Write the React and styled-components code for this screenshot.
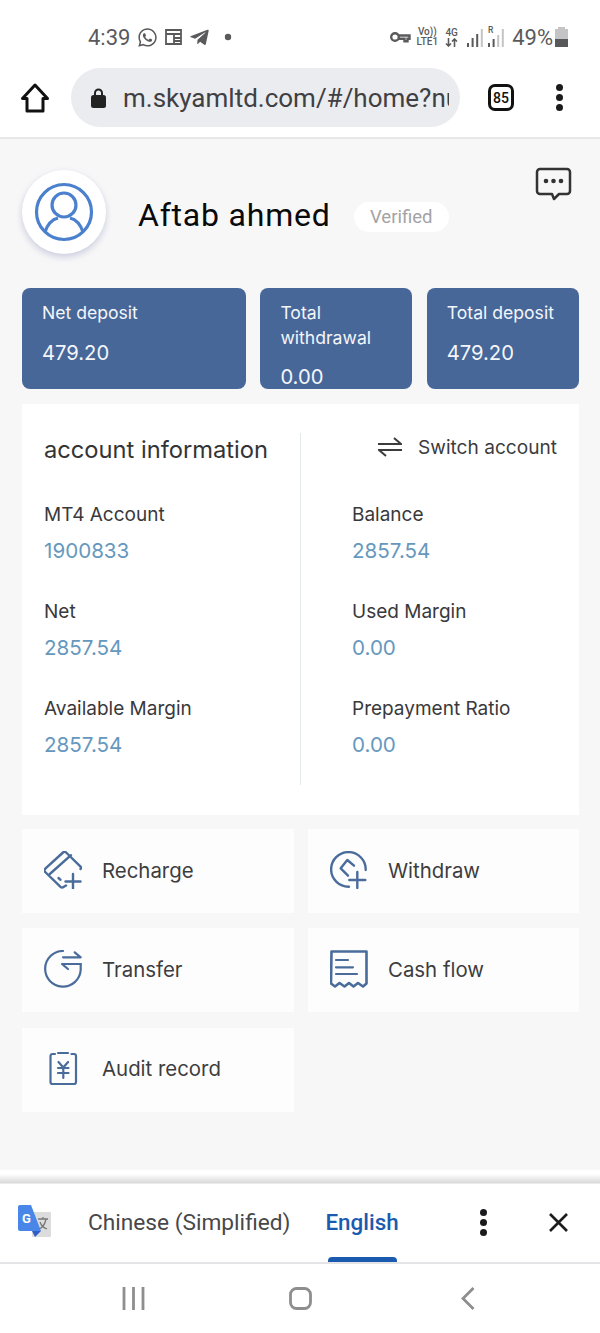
import React from 'react';
import styled, { createGlobalStyle } from 'styled-components';
import { FaWhatsapp, FaTelegramPlane } from 'react-icons/fa';

const GlobalStyle = createGlobalStyle`
  html, body { margin: 0; padding: 0; background: #fff; }
  body { font-family: Roboto, "Liberation Sans", sans-serif; }
  * { box-sizing: border-box; }
`;

const Screen = styled.div`
  width: 600px;
  height: 1333px;
  display: flex;
  flex-direction: column;
  overflow: hidden;
  background: #fff;
`;

/* status bar */
const StatusBar = styled.div`
  height: 68px;
  flex: none;
  padding: 6px 32px 0 88px;
  display: flex;
  align-items: center;
  justify-content: space-between;
  color: #5a5a5c;
`;
const StatusGroup = styled.div`
  display: flex;
  align-items: center;
`;
const Clock = styled.span`
  font-size: 22px;
  margin-right: 7px;
`;
const Pct = styled.span`
  font-size: 22px;
  margin: 0 2px 0 8px;
`;
const NetText = styled.div`
  display: flex;
  flex-direction: column;
  align-items: center;
  font-size: 10px;
  line-height: 10px;
  font-weight: 500;
  margin-left: ${p => p.$gap}px;
`;
const StatusSvg = styled.svg`
  display: block;
  margin-left: ${p => p.$left || 0}px;
`;
const Whatsapp = styled(FaWhatsapp)`
  display: block;
`;
const Telegram = styled(FaTelegramPlane)`
  display: block;
  margin-left: 7px;
`;

/* browser toolbar */
const Toolbar = styled.div`
  height: 71px;
  flex: none;
  padding: 0 21px 10px 21px;
  display: flex;
  align-items: center;
  border-bottom: 2px solid #e8e8ea;
`;
const UrlPill = styled.div`
  flex: none;
  width: 389px;
  height: 59px;
  margin-left: 22px;
  border-radius: 30px;
  background: #ebecf0;
  display: flex;
  align-items: center;
  padding: 0 11px 0 20px;
`;
const UrlText = styled.div`
  margin-left: 17px;
  font-size: 26px;
  color: #3f4043;
  white-space: nowrap;
  overflow: hidden;
  flex: 1;
`;
const TabCount = styled.div`
  flex: none;
  width: 26px;
  height: 27px;
  margin-left: 28px;
  border: 3px solid #111;
  border-radius: 7px;
  font-size: 14px;
  font-weight: 500;
  color: #111;
  display: flex;
  align-items: center;
  justify-content: center;
`;
const Dots = styled.div`
  display: flex;
  flex-direction: column;
  gap: 3px;
  margin-left: ${p => p.$left}px;
  span {
    width: 7px;
    height: 7px;
    border-radius: 50%;
    background: #1b1b1d;
  }
`;

/* page */
const Page = styled.main`
  flex: 1;
  background: #f8f7f8;
  padding: 28px 21px 0 22px;
  font-family: Inter, Roboto, "Noto Sans", sans-serif;
`;
const Profile = styled.header`
  display: flex;
  align-items: flex-start;
  height: 121px;
`;
const Avatar = styled.div`
  width: 84px;
  height: 84px;
  margin-top: 3px;
  border-radius: 50%;
  background: #fff;
  box-shadow: 0 3px 7px rgba(90, 110, 160, 0.3);
  display: flex;
  align-items: center;
  justify-content: center;
  flex: none;
`;
const Name = styled.h1`
  margin: 29px 0 0 32px;
  font-size: 32px;
  line-height: 38px;
  font-weight: 400;
  color: #0a0a0a;
  font-family: Roboto, sans-serif;
  letter-spacing: 0.8px;
`;
const Badge = styled.span`
  margin: 35px 0 0 23px;
  width: 95px;
  height: 30px;
  border-radius: 15px;
  background: #fff;
  font-size: 18.5px;
  color: #a3a3a5;
  font-family: Roboto, sans-serif;
  display: flex;
  align-items: center;
  justify-content: center;
`;
const ChatButton = styled.div`
  margin-left: auto;
  margin-right: 7px;
`;
const Stats = styled.section`
  display: grid;
  grid-template-columns: 224px 152px 152px;
  column-gap: 14.4px;
`;
const StatCard = styled.div`
  height: 101px;
  border-radius: 8px;
  background: #476799;
  color: #f4f6fa;
  padding: 12px 20px 0;
  overflow: hidden;
`;
const StatLabel = styled.div`
  font-size: 17.6px;
  line-height: 25px;
`;
const StatValue = styled.div`
  margin-top: ${p => p.$top}px;
  font-size: 20.2px;
  line-height: 26px;
`;
const Panel = styled.section`
  margin-top: 15px;
  height: 411px;
  background: #fff;
  display: grid;
  grid-template-columns: 279px 1fr;
  padding-top: 29px;
`;
const PanelCol = styled.div`
  height: 352px;
  padding-left: ${p => p.$left}px;
  border-right: ${p => (p.$line ? '1px solid #e4e9ec' : 'none')};
`;
const PanelTitle = styled.h2`
  margin: 2px 0 0;
  height: 38px;
  font-size: 23.7px;
  line-height: 30px;
  font-weight: 400;
  color: #343436;
`;
const SwitchRow = styled.div`
  height: 28px;
  display: flex;
  align-items: center;
  justify-content: flex-end;
  padding-right: 22px;
  font-size: 19.1px;
  color: #3c3c3e;
  span { margin-left: 16px; }
`;
const Field = styled.div`
  margin-top: ${p => p.$top}px;
  height: 70px;
`;
const FieldLabel = styled.div`
  font-size: 19px;
  line-height: 24px;
  color: #39393b;
`;
const FieldValue = styled.div`
  margin-top: 11px;
  font-size: 20.6px;
  line-height: 26px;
  color: #6698bd;
`;
const Actions = styled.section`
  margin-top: 14px;
  display: grid;
  grid-template-columns: 272px 271px;
  column-gap: 14px;
  row-gap: 15.4px;
`;
const Action = styled.div`
  height: 84px;
  background: #fdfdfd;
  padding: 0 0 2px 22px;
  display: flex;
  align-items: center;
  font-size: 20.4px;
  color: #3d3d3f;
  svg { flex: none; }
  span { margin-left: 20px; }
`;

/* translate bar */
const TranslateBar = styled.div`
  height: 96px;
  flex: none;
  padding: 14px 31px 0 18px;
  display: flex;
  align-items: center;
  background: linear-gradient(#f4f4f4 0, #fff 3px, #fff 6px, #d8d8d8 15px, #fff 16px);
  border-bottom: 2px solid #e4e4e6;
`;
const LangFrom = styled.span`
  margin-left: 36px;
  font-size: 22.7px;
  color: #48484a;
`;
const LangTo = styled.span`
  position: relative;
  margin-left: 35px;
  font-size: 22.4px;
  font-weight: 500;
  color: #1a5bb0;
  &::after {
    content: '';
    position: absolute;
    left: 3px;
    right: 2px;
    bottom: -27px;
    height: 5px;
    border-radius: 4px 4px 0 0;
    background: #1a5bb0;
  }
`;
const CloseButton = styled.div`
  margin-left: auto;
  height: 21px;
`;
const NavBar = styled.nav`
  height: 69px;
  flex: none;
  display: flex;
  align-items: center;
  justify-content: space-between;
  padding: 0 125px 0 122px;
  svg { display: block; }
`;

const navy = '#4a6c9b';

const KeyIcon = () => (
  <svg width="22" height="12" viewBox="0 0 21 12" fill="none" stroke="#5a5a5c" strokeWidth="2.4">
    <circle cx="5.5" cy="6" r="3.8" />
    <path d="M9 4.5h11v3.2h-2v2.5h-3V7.7H9" />
  </svg>
);

const Signal = ({ r, left }) => (
  <StatusSvg $left={left} width="16" height="22" viewBox="0 0 16 22" fill="#5a5a5c">
    {r && <text x="0" y="7" fontSize="8.500" fontWeight="500" fontFamily="Roboto, sans-serif">R</text>}
    <rect x="0" y="17" width="2" height="4" />
    <rect x="4.600" y={r ? 13 : 12} width="2" height={r ? 8 : 9} />
    <rect x="9.200" y={r ? 9 : 8} width="2" height={r ? 12 : 13} fill={r ? '#c4c4c6' : '#5a5a5c'} />
    <rect x="13.800" y="3" width="2" height="18" fill="#c4c4c6" />
  </StatusSvg>
);

const ProfileIcon = () => (
  <svg width="60" height="60" viewBox="0 0 60 60" fill="none" stroke="#4a80cd" strokeWidth="3.2">
    <circle cx="30" cy="30" r="27.5" />
    <circle cx="30" cy="23" r="12" />
    <path d="M11 50c3-9 9-13 13-14M49 50c-3-9-9-13-13-14" />
  </svg>
);

const ChatIcon = () => (
  <svg width="37" height="35" viewBox="0 0 37 35" fill="none">
    <path d="M5 2h27a3 3 0 0 1 3 3v19a3 3 0 0 1-3 3h-8l-5 5-2-5H5a3 3 0 0 1-3-3V5a3 3 0 0 1 3-3z" stroke="#333" strokeWidth="2.5" strokeLinejoin="round" />
    <circle cx="11" cy="14" r="2.3" fill="#333" />
    <circle cx="18.5" cy="14" r="2.3" fill="#333" />
    <circle cx="26" cy="14" r="2.3" fill="#333" />
  </svg>
);

const RechargeIcon = () => (
  <svg width="38" height="38" viewBox="0 0 38 38" fill="none" stroke={navy} strokeWidth="2.4" strokeLinecap="round" strokeLinejoin="round">
    <path d="M22 34.500l-2.500 1.500c-1 .7-2 .7-3-.2L1.200 21c-1-1-1-2.400.1-3.300L19 1.500c1-.9 2.200-.9 3.100 0l14.200 13.800c.8.800.8 1.800.2 2.700" />
    <path d="M5.800 23L27 4.200" />
    <path d="M14.500 27l2 1.800" />
    <path d="M29 23v15M21.500 30.500h15" />
  </svg>
);

const WithdrawIcon = () => (
  <svg width="38" height="38" viewBox="0 0 38 38" fill="none" stroke={navy} strokeWidth="2.4" strokeLinecap="round" strokeLinejoin="round">
    <path d="M19 35.700A17.300 17.300 0 1 1 35.700 19" />
    <path d="M18 24.700l-7.300-7.400 6.600-8.300 6.700 5.700" />
    <path d="M27.300 21v16M19.300 29h16" />
  </svg>
);

const TransferIcon = () => (
  <svg width="38" height="38" viewBox="0 0 38 38" fill="none" stroke={navy} strokeWidth="2.2" strokeLinecap="round" strokeLinejoin="round">
    <path d="M19 1a17.800 17.800 0 1 0 17.700 19v-6" />
    <path d="M19 7.300h17.700l-6-5" />
    <path d="M36.700 14H18l6 5" />
  </svg>
);

const CashIcon = () => (
  <svg width="38" height="38" viewBox="0 0 38 38" fill="none" stroke={navy} strokeWidth="2.6" strokeLinejoin="round" strokeLinecap="round">
    <path d="M1.500 1.500h35v32l-3.500 3-5-3.500-4.500 3.500-4.500-3.500-4.500 3.500-5-3.500-4.500 3.500-4-3z" />
    <path d="M6 10h12M6 17.300h17M6 24h21" strokeWidth="2.2" />
  </svg>
);

const AuditIcon = () => (
  <svg width="38" height="38" viewBox="0 0 38 38" fill="none" stroke={navy} strokeWidth="2.2" strokeLinecap="round" strokeLinejoin="round">
    <path d="M11 4H8.500a2 2 0 0 0-2 2v26a2 2 0 0 0 2 2h21.500a2 2 0 0 0 2-2V6a2 2 0 0 0-2-2h-2.500" />
    <path d="M14 3h10" />
    <path d="M14.500 12l4.800 5.500 4.800-5.500M14 18h10.500M14 23h10.500M19.300 17.500V28" />
  </svg>
);

const TranslateLogo = () => (
  <svg width="34" height="34" viewBox="0 0 34 34">
    <rect x="14" y="7" width="19" height="25" rx="1" fill="#dcdcdc" />
    <path d="M2 0h11l10 26H2a2 2 0 0 1-2-2V2a2 2 0 0 1 2-2z" fill="#4a86e8" />
    <path d="M14 26h9l-6 6z" fill="#2f5fc4" />
    <text x="4" y="18" fontFamily="Roboto, sans-serif" fontSize="13" fontWeight="700" fill="#fff">G</text>
    <path d="M20 14h10M25 12v2M28 14c-1 5-4 9-7 10M22 17c1 3 4 6 7 7" stroke="#777" strokeWidth="1.300" fill="none" />
  </svg>
);

const CloseIcon = () => (
  <svg width="21" height="21" viewBox="0 0 21 21" stroke="#1c1c1e" strokeWidth="2.6">
    <path d="M2 2l17 17M19 2L2 19" />
  </svg>
);

export default function App() {
  return (
    <Screen>
      <GlobalStyle />
      <StatusBar>
        <StatusGroup>
          <Clock>4:39</Clock>
          <Whatsapp size={21} />
          <StatusSvg $left={7} width="17" height="16" viewBox="0 0 17 16" fill="none" stroke="#5a5a5c" strokeWidth="1.800">
            <path d="M1 1h15v14H1zM1 5h15M9 9h7M9 12h7M9 5v10" />
          </StatusSvg>
          <Telegram size={21} />
          <StatusSvg $left={14} width="8" height="8" viewBox="0 0 8 8" fill="#5a5a5c">
            <circle cx="4" cy="4" r="3.200" />
          </StatusSvg>
        </StatusGroup>
        <StatusGroup>
          <KeyIcon />
          <NetText $gap={6}><span>Vo))</span><span>LTE1</span></NetText>
          <NetText $gap={7}>
            <span>4G</span>
            <svg width="13" height="9" viewBox="0 0 13 9" fill="none" stroke="#5a5a5c" strokeWidth="1.600">
              <path d="M3.500 0v8M1 5.500l2.500 2.500L6 5.500M9.500 9V1M7 3.500L9.500 1 12 3.500" />
            </svg>
          </NetText>
          <Signal left={9} />
          <Signal r left={5} />
          <Pct>49%</Pct>
          <svg width="13" height="20" viewBox="0 0 13 20">
            <rect x="3" y="0" width="7" height="3" fill="#c4c4c6" />
            <rect x="0" y="2" width="13" height="18" fill="#c4c4c6" />
            <rect x="0" y="12" width="13" height="8" fill="#58585a" />
          </svg>
        </StatusGroup>
      </StatusBar>

      <Toolbar>
        <svg width="28" height="30" viewBox="0 0 28 30" fill="none" stroke="#111" strokeWidth="3" strokeLinejoin="round">
          <path d="M14 2L1.500 15.500H6V28h16V15.500h4.500z" />
        </svg>
        <UrlPill>
          <svg width="15" height="20" viewBox="0 0 15 20">
            <path d="M4 8V5a3.500 3.500 0 0 1 7 0v3" fill="none" stroke="#222" strokeWidth="2" />
            <rect x="0" y="7" width="15" height="13" rx="2.500" fill="#222" />
          </svg>
          <UrlText>m.skyamltd.com/#/home?nu</UrlText>
        </UrlPill>
        <TabCount>85</TabCount>
        <Dots $left={42}><span /><span /><span /></Dots>
      </Toolbar>

      <Page>
        <Profile>
          <Avatar><ProfileIcon /></Avatar>
          <Name>Aftab ahmed</Name>
          <Badge>Verified</Badge>
          <ChatButton><ChatIcon /></ChatButton>
        </Profile>

        <Stats>
          <StatCard>
            <StatLabel>Net deposit</StatLabel>
            <StatValue $top={15}>479.20</StatValue>
          </StatCard>
          <StatCard>
            <StatLabel>Total withdrawal</StatLabel>
            <StatValue $top={14}>0.00</StatValue>
          </StatCard>
          <StatCard>
            <StatLabel>Total deposit</StatLabel>
            <StatValue $top={15}>479.20</StatValue>
          </StatCard>
        </Stats>

        <Panel>
          <PanelCol $left={22} $line>
            <PanelTitle>account information</PanelTitle>
            <Field $top={30}>
              <FieldLabel>MT4 Account</FieldLabel>
              <FieldValue>1900833</FieldValue>
            </Field>
            <Field $top={27}>
              <FieldLabel>Net</FieldLabel>
              <FieldValue>2857.54</FieldValue>
            </Field>
            <Field $top={27}>
              <FieldLabel>Available Margin</FieldLabel>
              <FieldValue>2857.54</FieldValue>
            </Field>
          </PanelCol>
          <PanelCol $left={51}>
            <SwitchRow>
              <svg width="24" height="20" viewBox="0 0 24 20" fill="none" stroke="#3c3c3e" strokeWidth="2">
                <path d="M0 7h23L16 1M24 13H1l7 6" />
              </svg>
              <span>Switch account</span>
            </SwitchRow>
            <Field $top={42}>
              <FieldLabel>Balance</FieldLabel>
              <FieldValue>2857.54</FieldValue>
            </Field>
            <Field $top={27}>
              <FieldLabel>Used Margin</FieldLabel>
              <FieldValue>0.00</FieldValue>
            </Field>
            <Field $top={27}>
              <FieldLabel>Prepayment Ratio</FieldLabel>
              <FieldValue>0.00</FieldValue>
            </Field>
          </PanelCol>
        </Panel>

        <Actions>
          <Action><RechargeIcon /><span>Recharge</span></Action>
          <Action><WithdrawIcon /><span>Withdraw</span></Action>
          <Action><TransferIcon /><span>Transfer</span></Action>
          <Action><CashIcon /><span>Cash flow</span></Action>
          <Action><AuditIcon /><span>Audit record</span></Action>
        </Actions>
      </Page>

      <TranslateBar>
        <TranslateLogo />
        <LangFrom>Chinese (Simplified)</LangFrom>
        <LangTo>English</LangTo>
        <Dots $left={81}><span /><span /><span /></Dots>
        <CloseButton><CloseIcon /></CloseButton>
      </TranslateBar>

      <NavBar>
        <svg width="23" height="23" viewBox="0 0 23 23" stroke="#8e8e90" strokeWidth="2.800">
          <path d="M2 0v23M11.500 0v23M21 0v23" />
        </svg>
        <svg width="23" height="23" viewBox="0 0 23 23" fill="none" stroke="#8e8e90" strokeWidth="2.800">
          <rect x="1.500" y="1.500" width="20" height="20" rx="6" />
        </svg>
        <svg width="20" height="23" viewBox="-6 0 20 23" fill="none" stroke="#8e8e90" strokeWidth="2.800">
          <path d="M12.500 1L2 11.500 12.500 22" />
        </svg>
      </NavBar>
    </Screen>
  );
}
